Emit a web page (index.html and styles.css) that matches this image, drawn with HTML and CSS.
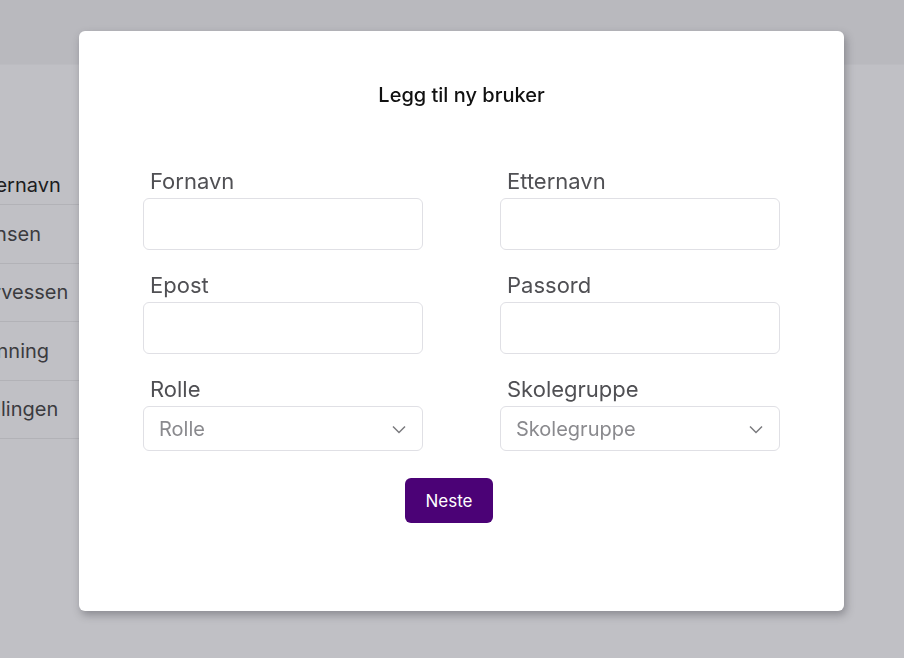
FILE: index.html
```html
<!DOCTYPE html>
<html lang="no">
<head>
<meta charset="utf-8">
<title>Legg til ny bruker</title>
<link rel="stylesheet" href="styles.css">
</head>
<body>
<div class="page">
  <header class="topbar"></header>
  <div class="table">
    <div class="cell head"><span>Etternavn</span></div>
    <div class="cell"><span>Hansen</span></div>
    <div class="cell"><span>Torvessen</span></div>
    <div class="cell"><span>Henning</span></div>
    <div class="cell"><span>Kvellingen</span></div>
  </div>
</div>
<div class="overlay">
  <div class="modal">
    <h1 class="title">Legg til ny bruker</h1>
    <form class="form">
      <div class="field">
        <label class="label">Fornavn</label>
        <input class="input" type="text">
      </div>
      <div class="field">
        <label class="label">Etternavn</label>
        <input class="input" type="text">
      </div>
      <div class="field">
        <label class="label">Epost</label>
        <input class="input" type="text">
      </div>
      <div class="field">
        <label class="label">Passord</label>
        <input class="input" type="password">
      </div>
      <div class="field">
        <label class="label">Rolle</label>
        <div class="select"><span>Rolle</span>
          <svg width="14" height="9" viewBox="0 0 14 9"><path d="M1 1.5 L7 7.5 L13 1.5" fill="none" stroke="#7a7a7e" stroke-width="1.5"/></svg>
        </div>
      </div>
      <div class="field">
        <label class="label">Skolegruppe</label>
        <div class="select"><span>Skolegruppe</span>
          <svg width="14" height="9" viewBox="0 0 14 9"><path d="M1 1.5 L7 7.5 L13 1.5" fill="none" stroke="#7a7a7e" stroke-width="1.5"/></svg>
        </div>
      </div>
    </form>
    <div class="actions"><button class="btn" type="button">Neste</button></div>
  </div>
</div>
</body>
</html>
```
FILE: styles.css
```css
* { box-sizing: border-box; }
html, body { margin: 0; height: 100%; }
body {
  font-family: Inter, "Noto Sans", "Liberation Sans", sans-serif;
  background: #c0c0c5;
  overflow: hidden;
}
.page { height: 658px; }
.topbar {
  height: 65px;
  background: #b9b9be;
  border-bottom: 1px solid #bcbcc1;
}
.table {
  width: 79px;
  overflow: hidden;
  margin-top: 100px;
}
.cell {
  height: 58.5px;
  border-bottom: 1px solid #b2b2b7;
  display: flex;
  align-items: center;
  white-space: nowrap;
  font-size: 20px;
  color: #3b3b3f;
}
.cell span { display: block; }
.table .cell:nth-child(1) { height: 40px; color: #1c1c20; }
.table .cell:nth-child(1) span { margin-left: -29px; }
.table .cell:nth-child(2) span { margin-left: -31px; }
.table .cell:nth-child(3) span { margin-left: -30px; }
.table .cell:nth-child(4) span { margin-left: -30px; }
.table .cell:nth-child(5) span { margin-left: -39px; }

.overlay {
  position: fixed;
  inset: 0;
  padding: 31px 0 0 79px;
}
.modal {
  width: 765px;
  height: 580px;
  background: #fff;
  border-radius: 6px;
  box-shadow: 2px 4px 8px rgba(40, 40, 50, 0.35);
  padding: 52px 64px 0;
}
.title {
  margin: 0;
  text-align: center;
  font-size: 20px;
  line-height: 24px;
  font-weight: 500;
  color: #111;
}
.form {
  margin-top: 63px;
  display: grid;
  grid-template-columns: 280px 280px;
  column-gap: 77px;
  row-gap: 24px;
}
.field { display: flex; flex-direction: column; }
.label {
  padding-left: 7px;
  font-size: 22px;
  line-height: 22px;
  padding-bottom: 6px;
  color: #505054;
}
.input {
  height: 52px;
  border: 1px solid #e0e0e5;
  border-radius: 6px;
  background: #fff;
  font: inherit;
}
.select {
  height: 45px;
  border: 1px solid #e0e0e5;
  border-radius: 6px;
  display: flex;
  align-items: center;
  justify-content: space-between;
  padding: 0 16px 0 15px;
  font-size: 20px;
  color: #8a8a8e;
}
.select svg { margin-top: 2px; }
.actions {
  margin-top: 27px;
  display: flex;
  justify-content: center;
  padding-right: 25px;
}
.btn {
  width: 88px;
  height: 45px;
  border: none;
  border-radius: 6px;
  background: #4b0276;
  color: #fff;
  font-family: inherit;
  font-size: 17px;
}
```
